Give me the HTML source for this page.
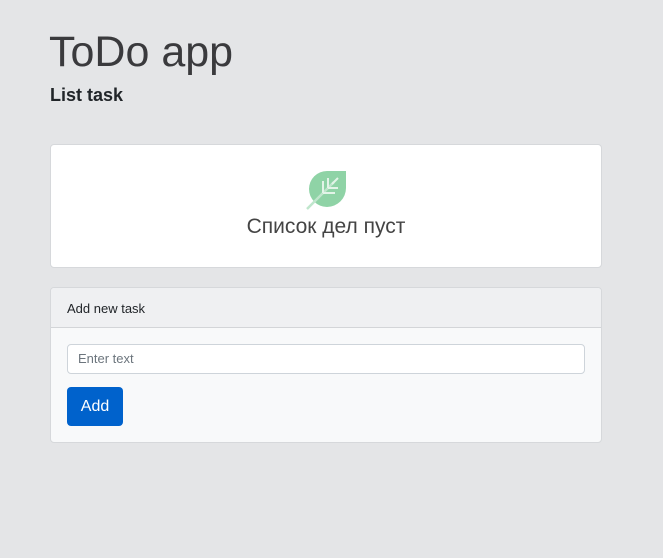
<!DOCTYPE html>
<html><head><meta charset="utf-8"><style>
*{box-sizing:border-box;margin:0;padding:0}
body{width:663px;height:558px;background:#e4e5e7;font-family:"Liberation Sans",sans-serif;color:#212529;position:relative;overflow:hidden}
h1{position:absolute;left:49px;top:28px;font-weight:300;font-size:43px;line-height:48px;color:#3a3a3d}
h2{position:absolute;left:50px;top:84px;font-weight:bold;font-size:18px;line-height:22px}
.c1{position:absolute;left:50px;top:144px;width:552px;height:124px;background:#fff;border:1px solid #d6d8db;border-radius:4px}
.c1 .t{position:absolute;left:0;right:0;top:70px;text-align:center;font-size:21px;font-weight:300;color:#444}
.c2{position:absolute;left:50px;top:287px;width:552px;height:156px;background:#f8f9fa;border:1px solid #d6d8db;border-radius:4px;overflow:hidden}
.hd{height:40px;background:#eff0f2;border-bottom:1px solid #d3d5d8;font-size:13px;line-height:42px;padding-left:16px}
.in{position:absolute;left:16px;top:56px;width:518px;height:30px;background:#fff;border:1px solid #ced4da;border-radius:4px;font-size:13px;color:#6c757d;line-height:28px;padding-left:10px}
.bt{position:absolute;left:16px;top:99px;width:56px;height:39px;background:#0062cc;border-radius:4px;color:#fff;font-size:16px;line-height:39px;text-align:center}
</style></head><body>
<h1>ToDo app</h1>
<h2>List task</h2>
<div class="c1">
<svg style="position:absolute;left:255px;top:25px" width="42" height="40" viewBox="0 0 42 40">
<path d="M40 1 H21 A18 18 0 0 0 21 37 A19 19 0 0 0 40 18 Z" fill="#8fd3a6"/>
<path d="M1 39 L28 12" stroke="#bfe6cc" stroke-width="2.5"/>
<path d="M17 23 V11 M17 23 H29 M22 18 V8 M22 18 H32 M26 14 L32 8" stroke="#e3f4e8" stroke-width="2"/>
</svg>
<div class="t">Список дел пуст</div>
</div>
<div class="c2">
<div class="hd">Add new task</div>
<div class="in">Enter text</div>
<div class="bt">Add</div>
</div>
</body></html>
